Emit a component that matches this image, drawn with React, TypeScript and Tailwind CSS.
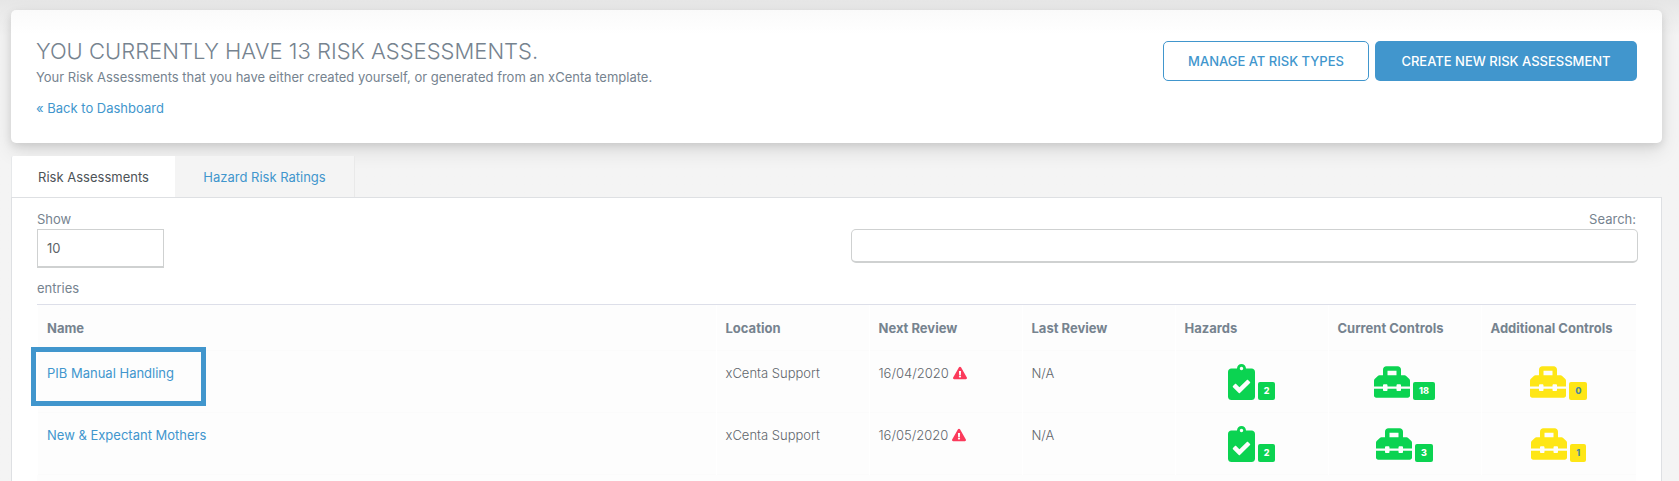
import { FaClipboardCheck, FaExclamationTriangle, FaToolbox } from "react-icons/fa";
import type { ReactNode } from "react";

type Assessment = {
  name: string;
  location: string;
  nextReview: string;
  lastReview: string;
  hazards: number;
  currentControls: number;
  additionalControls: number;
  highlighted?: boolean;
};

const assessments: Assessment[] = [
  {
    name: "PIB Manual Handling",
    location: "xCenta Support",
    nextReview: "16/04/2020",
    lastReview: "N/A",
    hazards: 2,
    currentControls: 18,
    additionalControls: 0,
    highlighted: true,
  },
  {
    name: "New & Expectant Mothers",
    location: "xCenta Support",
    nextReview: "16/05/2020",
    lastReview: "N/A",
    hazards: 2,
    currentControls: 3,
    additionalControls: 1,
  },
];

const columns = [
  "Name",
  "Location",
  "Next Review",
  "Last Review",
  "Hazards",
  "Current Controls",
  "Additional Controls",
];

function CountCell({ icon, count, tone }: { icon: ReactNode; count: number; tone: "green" | "yellow" }) {
  const green = tone === "green";
  return (
    <td className="border-l border-white p-0 pt-[13px] align-top">
      <a
        href="#"
        className={`flex items-end justify-center gap-[3px] text-4xl ${green ? "text-[#0bd351]" : "text-[#fee616]"}`}
      >
        {icon}
        <span
          className={`flex h-[18px] items-center rounded-xs px-1.5 text-[9px] font-extrabold ${
            green ? "bg-[#0bd351] text-white" : "bg-[#fee616] text-[#4b8a9b]"
          }`}
        >
          {count}
        </span>
      </a>
    </td>
  );
}

export default function App() {
  return (
    <div className="flex min-h-screen flex-col bg-[#f4f4f4] bg-linear-to-b from-[#e6e6e6] to-[#f4f4f4] to-[36px] pt-2.5 pr-[17px] pl-[11px] font-['Inter',sans-serif] text-[13px] leading-5 text-[#76838f]">
      <header className="flex h-[133px] items-start justify-between rounded-[5px] bg-white bg-linear-to-b from-[#fafafa] to-white to-[24px] px-[25px] pt-[31px] shadow-[0_8px_20px_rgba(0,0,0,0.1),0_3px_8px_rgba(0,0,0,0.1)]">
        <div>
          <h1 className="text-[22px] leading-5 font-light">YOU CURRENTLY HAVE 13 RISK ASSESSMENTS.</h1>
          <p className="mt-1.5">
            Your Risk Assessments that you have either created yourself, or generated from an xCenta template.
          </p>
          <a href="#" className="mt-[11px] block text-[#4196cd]">
            « Back to Dashboard
          </a>
        </div>
        <div className="flex gap-1.5">
          <button className="h-10 w-[206px] rounded-[5px] border border-[#4196cd] bg-white font-medium text-[#4196cd]">
            MANAGE AT RISK TYPES
          </button>
          <button className="h-10 w-[262px] rounded-[5px] bg-[#4196cd] font-medium text-white">
            CREATE NEW RISK ASSESSMENT
          </button>
        </div>
      </header>

      <nav className="mt-[13px] flex h-[41px]">
        <a
          href="#"
          className="flex w-[164px] items-center justify-center rounded-tl-xs border-l border-[#e6e8ea] bg-white text-[#4d5357]"
        >
          Risk Assessments
        </a>
        <a
          href="#"
          className="flex w-[180px] items-center justify-center border-r border-[#e9e9e9] bg-[#f4f4f4] text-[#4196cd]"
        >
          Hazard Risk Ratings
        </a>
      </nav>

      <main className="flex-1 border border-b-0 border-[#dee0e3] bg-white px-[25px] pt-[11px]">
        <div className="flex items-start justify-between">
          <div>
            <label htmlFor="page-size" className="block">
              Show
            </label>
            <select
              id="page-size"
              className="block h-[39px] w-[127px] appearance-none border border-b-2 border-[#cfd1d1] bg-white px-[9px] text-[#5c6368]"
            >
              <option>10</option>
            </select>
            <span className="mt-2.5 block">entries</span>
          </div>
          <div className="-mr-0.5 flex w-[787px] flex-col">
            <label htmlFor="search" className="self-end pr-0.5">
              Search:
            </label>
            <input
              id="search"
              type="search"
              className="h-[34px] w-full rounded-[5px] border border-b-2 border-[#cfd1d1] bg-white px-2.5 outline-none"
            />
          </div>
        </div>

        <table className="mt-1.5 w-full table-fixed border-collapse bg-[#fdfdfd]">
          <colgroup>
            <col />
            <col className="w-[153px]" />
            <col className="w-[153px]" />
            <col className="w-[153px]" />
            <col className="w-[153px]" />
            <col className="w-[153px]" />
            <col className="w-[155px]" />
          </colgroup>
          <thead>
            <tr className="h-[46px]">
              {columns.map((column) => (
                <th
                  key={column}
                  scope="col"
                  className="border-t border-l border-t-[#dddfe9] border-l-white px-[9px] text-left font-bold whitespace-nowrap"
                >
                  {column}
                </th>
              ))}
            </tr>
          </thead>
          <tbody>
            {assessments.map((item) => (
              <tr key={item.name} className="h-[62px] border-t border-[#fbfbfb]">
                <td className="relative border-l border-white px-[9px] pt-3 align-top">
                  {item.highlighted && (
                    <span className="pointer-events-none absolute -top-1 -left-[7px] h-[59px] w-[175px] border-5 border-[#4196cd]" />
                  )}
                  <a href="#" className="text-[#4196cd]">
                    {item.name}
                  </a>
                </td>
                <td className="border-l border-white px-[9px] pt-3 align-top font-light text-[#5f666c]">
                  {item.location}
                </td>
                <td className="border-l border-white px-[9px] pt-3 align-top font-light text-[#5f666c]">
                  <span className="flex items-center gap-1">
                    {item.nextReview}
                    <FaExclamationTriangle className="text-sm text-[#fb3a5b]" />
                  </span>
                </td>
                <td className="border-l border-white px-[9px] pt-3 align-top font-light text-[#5f666c]">
                  {item.lastReview}
                </td>
                <CountCell icon={<FaClipboardCheck className="w-[27px]" />} count={item.hazards} tone="green" />
                <CountCell icon={<FaToolbox />} count={item.currentControls} tone="green" />
                <CountCell icon={<FaToolbox />} count={item.additionalControls} tone="yellow" />
              </tr>
            ))}
          </tbody>
          <tfoot>
            <tr className="h-1.5 border-t border-[#fbfbfb]">
              <td colSpan={columns.length} className="p-0" />
            </tr>
          </tfoot>
        </table>
      </main>
    </div>
  );
}
